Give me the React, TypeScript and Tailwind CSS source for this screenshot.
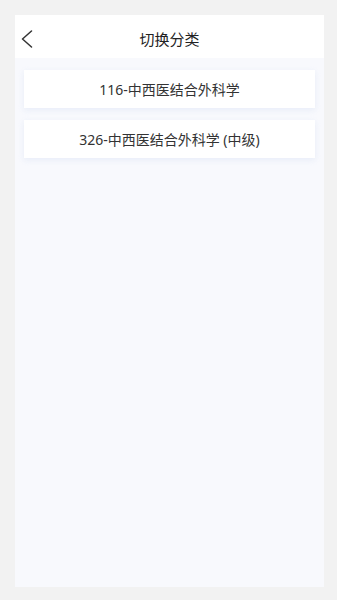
const items = ["116-中西医结合外科学", "326-中西医结合外科学 (中级)"];

export default function App() {
  return (
    <div
      className="min-h-[600px] w-full bg-[#f2f2f2] pl-[15px] pr-[13px] pt-[15px] pb-[13px]"
      style={{ fontFamily: '"Noto Sans", "Noto Sans CJK SC", sans-serif' }}
    >
      <div className="flex h-[572px] flex-col bg-[#f8f9fd]">
        <div className="relative flex h-[43px] items-center justify-center bg-white pt-[5px]">
          <svg
            className="absolute left-[6px] top-[15px]"
            width="12"
            height="18"
            viewBox="0 0 12 18"
            fill="none"
            stroke="#333"
            strokeWidth="1.5"
            strokeLinecap="round"
            strokeLinejoin="round"
          >
            <polyline points="10.5,1 1.5,9 10.5,17" />
          </svg>
          <span className="text-[15px] text-[#222]">切换分类</span>
        </div>
        <div className="flex flex-col gap-[12px] px-[9px] pt-[12px]">
          {items.map((t) => (
            <div
              key={t}
              className="flex h-[38px] items-center justify-center bg-white text-[14px] text-[#333] shadow-[0_2px_6px_rgba(220,228,245,0.6)]"
            >
              {t}
            </div>
          ))}
        </div>
      </div>
    </div>
  );
}
